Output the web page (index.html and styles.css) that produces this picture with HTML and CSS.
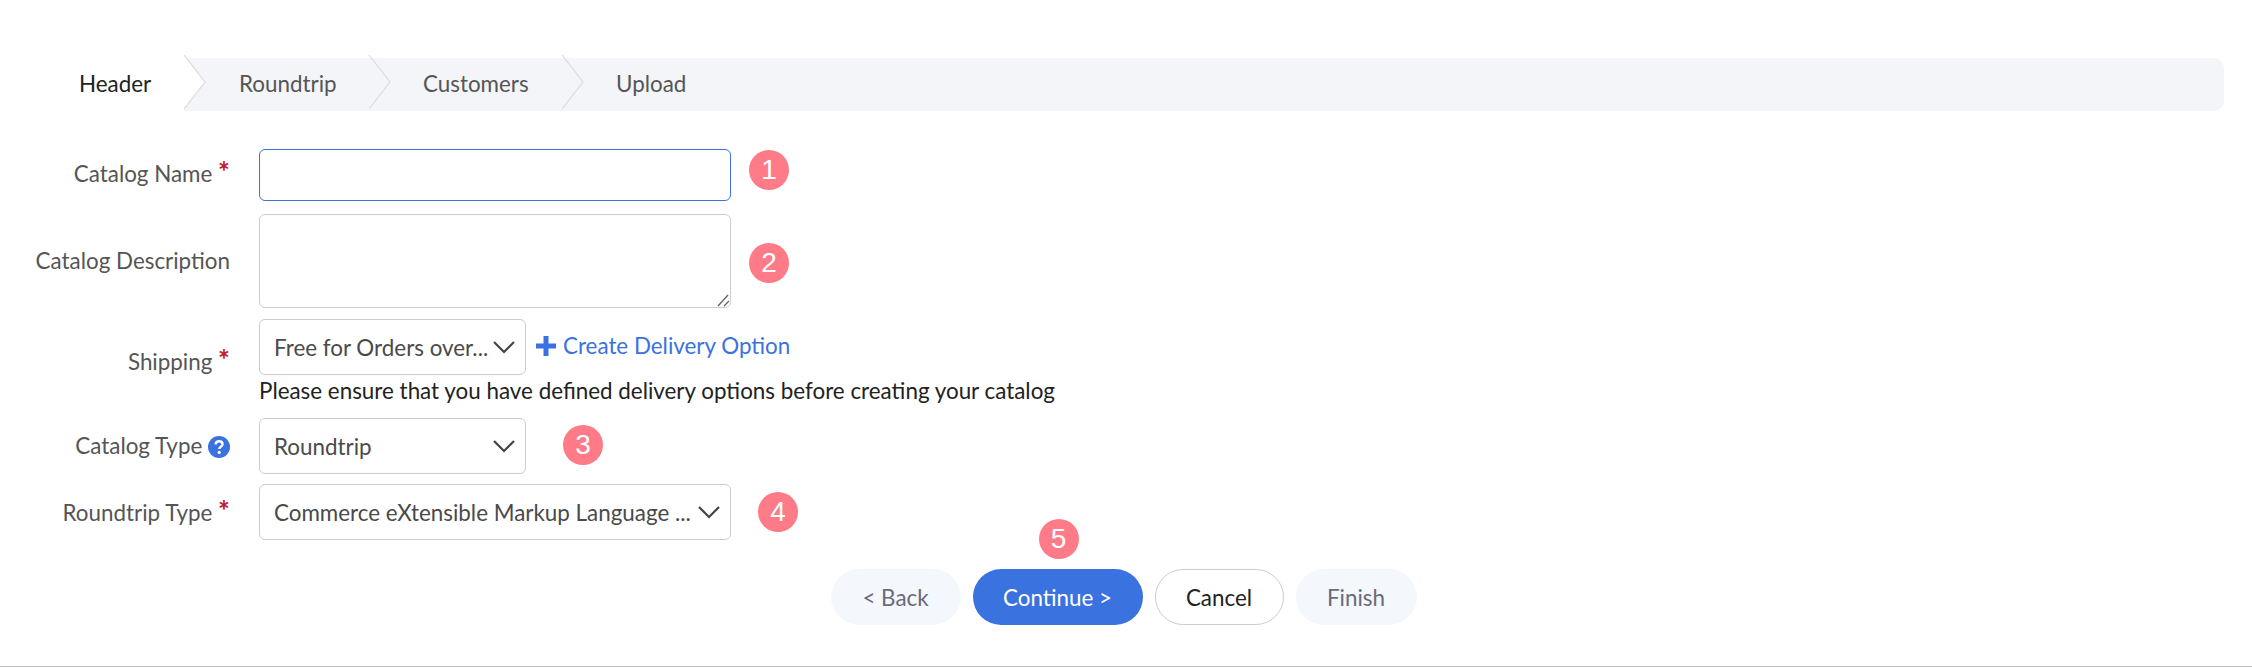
FILE: index.html
```html
<!DOCTYPE html>
<html>
<head>
    <title>Create Catalog</title>
    <link rel="stylesheet" href="styles.css">
</head>
<body>
    <div class="wizard">
        <div class="steps">
            <div class="step step-active">Header
                <svg class="chevron" width="24" height="54" viewBox="0 0 24 54"><path d="M0 0 22 27 0 54Z" fill="#fff"/><path d="M1 0 22 27 1 54" stroke="#dcdcdc" stroke-width="1.2" fill="none"/></svg>
            </div>
            <div class="step step-first">Roundtrip
                <svg class="chevron" width="24" height="54" viewBox="0 0 24 54"><path d="M1 0 22 27 1 54" stroke="#dcdcdc" stroke-width="1.2" fill="none"/></svg>
            </div>
            <div class="step step-mid">Customers
                <svg class="chevron" width="24" height="54" viewBox="0 0 24 54"><path d="M1 0 22 27 1 54" stroke="#dcdcdc" stroke-width="1.2" fill="none"/></svg>
            </div>
            <div class="step">Upload</div>
        </div>

        <div class="form-row row-name">
            <label class="row-label label-name">Catalog Name <span class="req">*</span></label>
            <input class="field field-wide field-focus" type="text">
            <span class="badge badge-gap-wide badge-up">1</span>
        </div>
        <div class="form-row row-desc">
            <label class="row-label label-desc">Catalog Description</label>
            <div class="field field-wide field-area">
                <svg class="grip" width="14" height="14" viewBox="0 0 14 14"><path d="M12 2 2 13M13 8 8 13" stroke="#666" stroke-width="1.4" fill="none"/></svg>
            </div>
            <span class="badge badge-gap-wide badge-down">2</span>
        </div>
        <div class="form-row row-shipping">
            <label class="row-label label-shipping">Shipping <span class="req">*</span></label>
            <div class="shipping-col">
                <div class="shipping-top">
                    <div class="field field-narrow select">
                        <span class="select-text">Free for Orders over...</span>
                        <svg class="caret" width="24" height="14" viewBox="0 0 24 14"><path d="M2 2 12 12 22 2" stroke="#444" stroke-width="2.2" fill="none"/></svg>
                    </div>
                    <a class="create-link">
                        <svg width="20" height="20" viewBox="0 0 20 20"><path d="M10 0V20M0 10H20" stroke="#3a72e0" stroke-width="5"/></svg>
                        Create Delivery Option
                    </a>
                </div>
                <p class="hint">Please ensure that you have defined delivery options before creating your catalog</p>
            </div>
        </div>
        <div class="form-row row-type">
            <label class="row-label label-type">Catalog Type
                <svg class="help" width="22" height="22" viewBox="0 0 22 22"><circle cx="11" cy="11" r="11" fill="#3a72e0"/><path d="M7.6 8.4C7.8 6.4 9.2 5.3 11.1 5.3 13 5.3 14.5 6.5 14.5 8.2 14.5 10.6 11.3 10.6 11.3 13" stroke="#fff" stroke-width="2.4" fill="none"/><circle cx="11.2" cy="16.4" r="1.6" fill="#fff"/></svg>
            </label>
            <div class="field field-narrow select">
                <span class="select-text">Roundtrip</span>
                <svg class="caret" width="24" height="14" viewBox="0 0 24 14"><path d="M2 2 12 12 22 2" stroke="#444" stroke-width="2.2" fill="none"/></svg>
            </div>
            <span class="badge badge-gap-narrow">3</span>
        </div>
        <div class="form-row row-roundtrip">
            <label class="row-label">Roundtrip Type <span class="req">*</span></label>
            <div class="field field-wide select">
                <span class="select-text">Commerce eXtensible Markup Language ...</span>
                <svg class="caret" width="24" height="14" viewBox="0 0 24 14"><path d="M2 2 12 12 22 2" stroke="#444" stroke-width="2.2" fill="none"/></svg>
            </div>
            <span class="badge badge-gap-last">4</span>
        </div>

        <div class="actions">
            <button class="btn btn-muted btn-back">&lt; Back</button>
            <div class="btn-wrap">
                <span class="badge badge-over">5</span>
                <button class="btn btn-primary">Continue &gt;</button>
            </div>
            <button class="btn btn-outline">Cancel</button>
            <button class="btn btn-muted btn-finish">Finish</button>
        </div>
    </div>
</body>
</html>
```

FILE: styles.css
```css
* {
    box-sizing: border-box;
}
body {
    margin: 0;
    height: 667px;
    overflow: hidden;
    background: #fff;
    font-family: Lato, "Noto Sans", sans-serif;
    font-size: 22.4px;
    color: #555;
}
.wizard {
    height: 667px;
    padding-top: 58px;
    border-bottom: 1px solid #bbb;
}
.steps {
    display: flex;
    height: 53px;
    margin-right: 28px;
    background: #f4f5f9;
    border-radius: 0 10px 10px 0;
}
.step {
    position: relative;
    display: flex;
    align-items: center;
    padding: 0 0 3px 55px;
}
.step-active {
    width: 184px;
    padding-left: 79px;
    background: #fff;
    color: #222;
}
.step-first {
    width: 184px;
}
.step-mid {
    width: 193px;
}
.chevron {
    position: absolute;
    right: -24px;
    top: -3px;
    z-index: 1;
}
.step-active .chevron {
    right: -23px;
}
.form-row {
    display: flex;
    align-items: center;
}
.row-name {
    margin-top: 38px;
}
.row-desc {
    margin-top: 13px;
}
.row-shipping {
    margin-top: 11px;
    align-items: flex-start;
}
.row-type {
    margin-top: 15px;
}
.row-roundtrip {
    margin-top: 10px;
}
.row-label {
    width: 230px;
    margin-right: 29px;
    text-align: right;
    flex: none;
}
.label-name {
    margin-bottom: 4px;
}
.label-desc {
    margin-bottom: 2px;
}
.label-shipping {
    margin-top: 29px;
}
.label-type {
    margin-bottom: 2px;
}
.req {
    color: #c2182b;
    font-size: 28px;
    font-weight: 700;
    line-height: 0;
}
.help {
    vertical-align: -4px;
}
.field {
    display: block;
    height: 56px;
    border: 1px solid #ccc;
    border-radius: 6px;
    background: #fff;
    flex: none;
}
.field-wide {
    width: 472px;
}
.field-narrow {
    width: 267px;
}
.field-focus {
    height: 52px;
    border-color: #3a72e0;
    outline: none;
}
.field-area {
    position: relative;
    height: 94px;
}
.grip {
    position: absolute;
    right: 0;
    bottom: 0;
}
.select {
    display: flex;
    align-items: center;
    justify-content: space-between;
    padding: 0 9px 0 14px;
    color: #4a4a4a;
}
.select-text {
    white-space: nowrap;
}
.shipping-top {
    display: flex;
    align-items: flex-start;
}
.create-link {
    display: flex;
    align-items: center;
    gap: 7px;
    margin: 13px 0 0 10px;
    color: #3a72e0;
}
.hint {
    margin: 4px 0 0;
    line-height: 24px;
    color: #222;
}
.badge {
    display: flex;
    align-items: center;
    justify-content: center;
    width: 40px;
    height: 40px;
    border-radius: 50%;
    background: #ff7b88;
    color: #fff;
    font-family: "Liberation Sans", sans-serif;
    font-size: 28px;
    flex: none;
}
.badge-gap-wide {
    margin-left: 18px;
}
.badge-gap-narrow {
    margin-left: 37px;
    margin-bottom: 2px;
}
.badge-gap-last {
    margin-left: 27px;
}
.badge-up {
    margin-bottom: 10px;
}
.badge-down {
    margin-top: 4px;
}
.actions {
    display: flex;
    justify-content: center;
    gap: 12px;
    margin-top: 29px;
    padding-right: 5px;
}
.btn-wrap {
    position: relative;
}
.badge-over {
    position: absolute;
    left: 66px;
    top: -50px;
}
.btn {
    display: block;
    height: 56px;
    border-radius: 28px;
    border: 1px solid transparent;
    font-family: inherit;
    font-size: 22.4px;
}
.btn-muted {
    background: #f4f7fb;
    color: #6a6a78;
}
.btn-back {
    width: 130px;
}
.btn-finish {
    width: 121px;
}
.btn-primary {
    width: 170px;
    background: #3a72e0;
    color: #fff;
}
.btn-outline {
    width: 129px;
    background: #fff;
    border-color: #ccc;
    color: #222;
}
```
